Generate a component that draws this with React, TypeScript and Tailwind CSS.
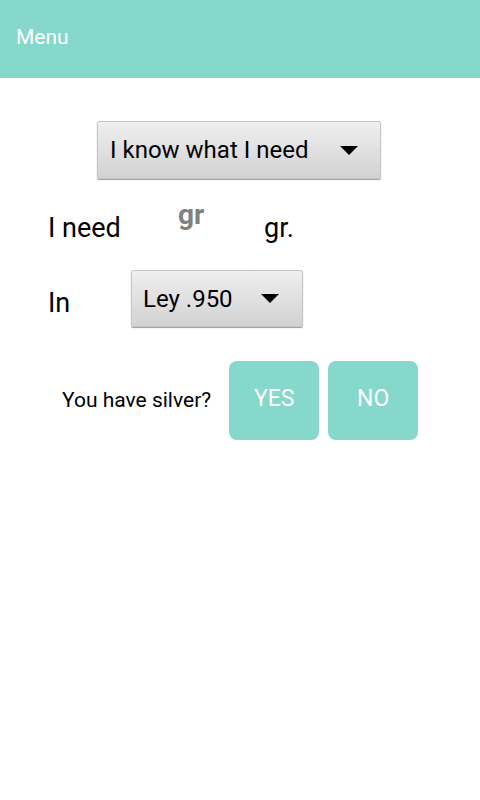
import React from 'react';

const font = { fontFamily: 'Roboto, "Noto Sans", sans-serif' };

const Caret: React.FC = () => (
  <svg width="18" height="9" viewBox="0 0 18 9" className="shrink-0">
    <polygon points="0,0 18,0 9,9" fill="#000" />
  </svg>
);

interface SpinnerProps {
  value: string;
  className?: string;
}

const Spinner: React.FC<SpinnerProps> = ({ value, className = '' }) => (
  <div
    className={`flex items-center justify-between rounded-[2px] border border-[#c6c6c6] bg-gradient-to-b from-[#efefef] to-[#d2d2d2] shadow-[0_1px_1px_rgba(0,0,0,0.4)] ${className}`}
  >
    <span className="leading-none text-black">{value}</span>
    <Caret />
  </div>
);

export default function App() {
  return (
    <div className="min-h-[800px] w-[480px] bg-white" style={font}>
      <header className="h-[78px] bg-[#86d7cc] pl-4 pt-[25px]">
        <span className="text-[21px] leading-[24px] text-white">Menu</span>
      </header>

      <div className="mt-[43px] flex pl-[97px]">
        <Spinner
          value="I know what I need"
          className="h-[58px] w-[284px] pl-[12px] pr-[22px] text-[24px]"
        />
      </div>

      <div className="mt-[17px] flex h-[48px] items-start pl-[48px]">
        <span className="mt-[16px] w-[130px] text-[27px] leading-[32px] text-black">I need</span>
        <span className="mt-[3px] w-[86px] text-[28px] font-bold leading-[32px] text-[#808080]">gr</span>
        <span className="mt-[16px] text-[27px] leading-[32px] text-black">gr.</span>
      </div>

      <div className="mt-[26px] flex items-start pl-[48px]">
        <span className="mt-[17px] w-[83px] text-[27px] leading-[32px] text-black">In</span>
        <Spinner value="Ley .950" className="h-[57px] w-[172px] pl-[11px] pr-[23px] text-[24px]" />
      </div>

      <div className="mt-[34px] flex items-center pl-[62px]">
        <span className="mr-[18px] text-[21px] text-black">You have silver?</span>
        <button className="flex h-[79px] w-[90px] items-center justify-center rounded-[8px] bg-[#86d7cc] pb-[2px] text-[23px] text-white">
          YES
        </button>
        <button className="ml-[9px] flex h-[79px] w-[90px] items-center justify-center rounded-[8px] bg-[#86d7cc] pb-[2px] text-[23px] text-white">
          NO
        </button>
      </div>
    </div>
  );
}
